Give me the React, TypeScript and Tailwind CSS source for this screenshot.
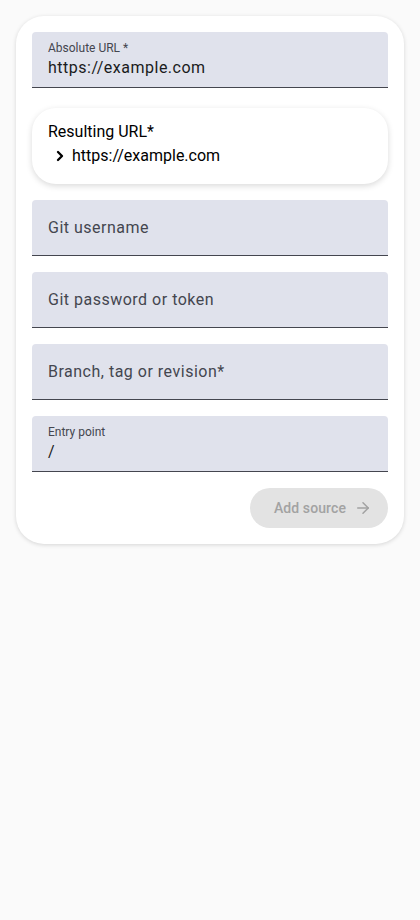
import { ArrowRight, ChevronRight } from "lucide-react";

function Field({ label, value }: { label: string; value?: string }) {
  return (
    <div className="h-14 rounded-t bg-[#e0e2ec] border-b border-[#44464f] px-4 flex flex-col justify-center">
      {value !== undefined ? (
        <>
          <div className="text-xs leading-4 text-[#44464f]">{label}</div>
          <div className="text-base leading-6 text-[#1a1b20] tracking-[0.5px]">{value}</div>
        </>
      ) : (
        <div className="text-base leading-6 text-[#44464f] tracking-[0.5px]">{label}</div>
      )}
    </div>
  );
}

export default function App() {
  return (
    <div className="min-h-screen bg-[#fafafa] p-4 font-['Roboto',sans-serif]">
      <div className="bg-white rounded-[28px] shadow-[0_1px_4px_rgba(0,0,0,0.15)] p-4 flex flex-col">
        <Field label="Absolute URL *" value="https://example.com" />

        <div className="mt-5 rounded-3xl bg-white shadow-[0_2px_6px_rgba(0,0,0,0.15)] px-4 pt-3 pb-4 flex flex-col">
          <div className="text-base leading-6 text-black">Resulting URL*</div>
          <div className="flex items-center gap-1 text-base leading-6 text-black">
            <ChevronRight className="w-4 h-4 ml-1" strokeWidth={3.5} />
            <span>https://example.com</span>
          </div>
        </div>

        <div className="mt-4 flex flex-col gap-4">
          <Field label="Git username" />
          <Field label="Git password or token" />
          <Field label="Branch, tag or revision*" />
          <Field label="Entry point" value="/" />
        </div>

        <div className="mt-4 flex justify-end">
          <button className="h-10 pl-6 pr-4 rounded-full bg-[#e3e3e3] text-[#a2a2a2] text-sm font-medium flex items-center gap-2 tracking-[0.1px]">
            Add source
            <ArrowRight className="w-[18px] h-[18px]" strokeWidth={2} />
          </button>
        </div>
      </div>
    </div>
  );
}
